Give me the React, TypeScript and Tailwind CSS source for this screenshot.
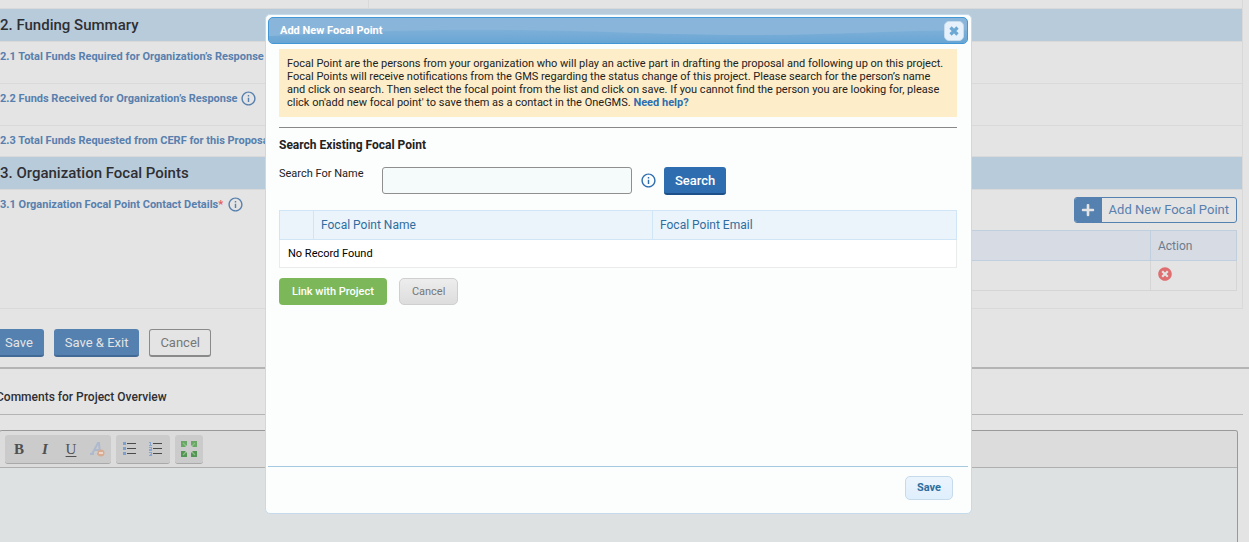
import type { ReactNode } from 'react'
import { FaPlus, FaTimesCircle } from 'react-icons/fa'
import { MdInfoOutline } from 'react-icons/md'

function InfoButton({ label, className = '' }: { label: string; className?: string }) {
  return (
    <button type="button" aria-label={label} className={`shrink-0 ${className}`}>
      <MdInfoOutline size={17} />
    </button>
  )
}

function SectionHeader({ children }: { children: ReactNode }) {
  return (
    <h2 className="h-[33px] border-b border-[#d9d9d9] bg-[#b8cbda] pl-2 text-[15px] leading-8 font-medium text-[#2f2f33]">
      {children}
    </h2>
  )
}

function FundRow({ label, info, className }: { label: string; info?: boolean; className: string }) {
  return (
    <div className={`flex items-start border-b border-[#d9d9d9] pt-[6px] pl-2 ${className}`}>
      <span className="text-[11px] leading-[18px] font-bold whitespace-nowrap text-[#5880ae]">{label}</span>
      {info && <InfoButton label="Info" className="ml-[2px] text-[#5880ae]" />}
    </div>
  )
}

function ToolGroup({ children }: { children: ReactNode }) {
  return <div className="flex h-[29px] rounded-[3px] border-b border-[#a9a9a9] bg-[#cbcbcb] px-px">{children}</div>
}

function ToolButton({ label, children }: { label: string; children: ReactNode }) {
  return (
    <button
      type="button"
      aria-label={label}
      className="flex w-[26px] items-center justify-center font-['Liberation_Serif',serif] text-[15px] leading-4 text-[#505050]"
    >
      {children}
    </button>
  )
}

function RemoveFormatIcon() {
  return (
    <svg width="16" height="16" viewBox="0 0 16 16">
      <path d="M1 13h4M8 13h3M3 13L9 2h1l1 11M5 9h5" fill="none" stroke="#adbace" strokeWidth="2" />
      <circle cx="12" cy="12" r="3.5" fill="#d9ab90" />
      <path d="M10 12h4" stroke="#f0e4dc" strokeWidth="1.4" />
    </svg>
  )
}

function BulletListIcon() {
  return (
    <svg width="16" height="16" viewBox="0 0 16 16" shapeRendering="crispEdges">
      {[1, 6, 11].map((y) => (
        <g key={y}>
          <rect x="1" y={y} width="3" height="3" fill="#7d9fce" />
          <rect x="5" y={y + 1} width="9" height="1" fill="#4a4a4a" />
        </g>
      ))}
    </svg>
  )
}

function NumberedListIcon() {
  return (
    <svg width="16" height="16" viewBox="0 0 16 16" shapeRendering="crispEdges">
      <path
        d="M1 1.500h1.500V4M1 4.500h3M1 6.500h2.500V8H1.500v1.500H4M1 11.500h2.500v3H1M1.500 13H4"
        fill="none"
        stroke="#86a5d0"
      />
      <path d="M5 2.500h9M5 7.500h9M5 12.500h9" stroke="#4a4a4a" />
    </svg>
  )
}

function MaximizeIcon() {
  return (
    <svg width="16" height="16" viewBox="0 0 16 16">
      <g fill="#68a864">
        <path d="M0 0h6v4L4 6H0z" />
        <path d="M10 0h6v6h-4l-2-2z" />
      </g>
      <g fill="#539653">
        <path d="M0 10h4l2 2v4H0z" />
        <path d="M12 10h4v6h-6v-4z" />
      </g>
      <path d="M2 2l3 3M14 2l-3 3M2 14l3-3M14 14l-3-3" stroke="#8fc089" strokeWidth="1.2" />
    </svg>
  )
}

function OverviewForm() {
  return (
    <form>
      <div className="mr-[6px] border-r border-[#d9d9d9]">
        <div className="h-[9px] border-b border-[#d9d9d9]">
          <div className="h-2 w-[334px] border-r border-[#d9d9d9] sm:w-[377px]" />
        </div>
        <SectionHeader>2. Funding Summary</SectionHeader>
        <FundRow label="2.1 Total Funds Required for Organization’s Response" className="h-[42px]" />
        <FundRow label="2.2 Funds Received for Organization’s Response" info className="h-[42px]" />
        <FundRow label="2.3 Total Funds Requested from CERF for this Proposal" className="h-[31px]" />
        <SectionHeader>3. Organization Focal Points</SectionHeader>
        <div className="flex border-b border-[#d9d9d9]">
          <div className="flex w-[377px] shrink-0 items-start pt-[6px] pl-2">
            <span className="text-[11px] leading-[18px] font-bold text-[#5880ae]">
              3.1 Organization Focal Point Contact Details<span className="text-[#e45a62]">*</span>
            </span>
            <InfoButton label="Info" className="ml-1 text-[#5880ae]" />
          </div>
          <div className="flex flex-1 flex-col items-end pt-[7px] pr-[5px] pb-[17px]">
            <button
              type="button"
              className="flex h-[26px] items-stretch overflow-hidden rounded-[3px] border border-[#5481b0] text-[13px] text-[#5880ae]"
            >
              <span className="flex w-[27px] items-center justify-center bg-[#5481b0] text-[#e4e4e4]">
                <FaPlus size={14} />
              </span>
              <span className="px-[7px] leading-6">Add New Focal Point</span>
            </button>
            <table className="mt-[7px] w-full border-collapse text-left text-[12px] text-[#6d7b8d]">
              <thead>
                <tr className="h-[30px] bg-[#d7dbe3]">
                  <th className="border border-[#c0cfde]" />
                  <th className="w-[86px] border border-[#c0cfde] px-[7px] font-normal">Action</th>
                </tr>
              </thead>
              <tbody>
                <tr className="h-[30px]">
                  <td className="border border-[#d5d5d5]" />
                  <td className="border border-[#d5d5d5] px-[7px] pb-[3px]">
                    <button type="button" aria-label="Remove" className="block text-[#df6e70]">
                      <FaTimesCircle size={14} />
                    </button>
                  </td>
                </tr>
              </tbody>
            </table>
          </div>
        </div>
      </div>
      <div className="mt-5 flex gap-[10px] pl-[2px] text-[13px]">
        <button type="button" className="h-7 rounded-[3px] border-b-2 border-[#426a96] bg-[#5481b0] px-[11px] pt-0.5 text-[#e4e4e4]">
          Save
        </button>
        <button type="button" className="h-7 rounded-[3px] border-b-2 border-[#426a96] bg-[#5481b0] px-[11px] pt-0.5 text-[#e4e4e4]">
          Save &amp; Exit
        </button>
        <button type="button" className="h-7 rounded-[3px] border border-b-2 border-[#8a8a8a] px-[10px] text-[#777777]">
          Cancel
        </button>
      </div>
    </form>
  )
}

function CommentsEditor() {
  return (
    <section className="mt-[10px] flex flex-1 flex-col border-t-2 border-[#b4b4b4]">
      <label
        htmlFor="comments"
        className="mr-[6px] block border-b border-[#b4b4b4] pt-5 pb-[9px] pl-1 text-[12px] leading-4 font-medium text-[#2f2f33]"
      >
        Comments for Project Overview
      </label>
      <div className="mt-[15px] mr-[11px] ml-[7px] flex flex-1 flex-col overflow-hidden rounded-t-[3px] border border-b-0 border-[#999999]">
        <div className="flex gap-[5px] border-b border-[#b0b0b0] bg-[#dcdcdc] px-[5px] pt-1 pb-[3px]">
          <ToolGroup>
            <ToolButton label="Bold">
              <b>B</b>
            </ToolButton>
            <ToolButton label="Italic">
              <b className="italic">I</b>
            </ToolButton>
            <ToolButton label="Underline">
              <span className="underline underline-offset-2">U</span>
            </ToolButton>
            <ToolButton label="Remove format">
              <RemoveFormatIcon />
            </ToolButton>
          </ToolGroup>
          <ToolGroup>
            <ToolButton label="Bulleted list">
              <BulletListIcon />
            </ToolButton>
            <ToolButton label="Numbered list">
              <NumberedListIcon />
            </ToolButton>
          </ToolGroup>
          <ToolGroup>
            <ToolButton label="Maximize">
              <MaximizeIcon />
            </ToolButton>
          </ToolGroup>
        </div>
        <textarea id="comments" className="flex-1 resize-none bg-[#dde1e2] p-2 outline-none" />
      </div>
    </section>
  )
}

function FocalPointDialog() {
  return (
    <div
      role="dialog"
      aria-labelledby="dialog-title"
      className="flex min-h-[500px] w-[707px] flex-col rounded-[5px] border border-[#c5dbec] bg-[#fcfdfd] p-[2px] pr-[3px] text-[11px] text-[#222222]"
    >
      <div className="relative flex h-[27px] items-center justify-between overflow-hidden rounded-[5px] border border-[#4297d7] bg-[#8ab5da] pr-[3px] pl-[11px]">
        <svg className="absolute inset-0 h-full w-full" viewBox="0 0 700 25" preserveAspectRatio="none">
          <defs>
            <linearGradient id="bar" x1="0" y1="0" x2="0" y2="1">
              <stop offset="0" stopColor="#7db0d9" />
              <stop offset="1" stopColor="#69a5d3" />
            </linearGradient>
          </defs>
          <path d="M0 18C80 14 160 11 250 12S400 17 480 17S620 13 700 12V25H0Z" fill="url(#bar)" />
        </svg>
        <h1 id="dialog-title" className="relative pt-0.5 font-bold text-white">
          Add New Focal Point
        </h1>
        <button
          type="button"
          aria-label="Close"
          className="relative flex size-5 items-center justify-center rounded-[5px] border border-[#c5dbec] bg-[#e6f1fb]"
        >
          <svg width="10" height="10" viewBox="0 0 10 10">
            <path d="M1.500 1.500l7 7M8.500 1.500l-7 7" stroke="#6da8d5" strokeWidth="3.200" />
          </svg>
        </button>
      </div>

      <div className="flex flex-1 flex-col items-start px-[11px] pt-[5px]">
        <p className="w-full bg-[#fdedc9] p-2 leading-[13px]">
          Focal Point are the persons from your organization who will play an active part in drafting the proposal and
          following up on this project. Focal Points will receive notifications from the GMS regarding the status change
          of this project. Please search for the person’s name and click on search. Then select the focal point from the
          list and click on save. If you cannot find the person you are looking for, please click on'add new focal point'
          to save them as a contact in the OneGMS.{' '}
          <a href="#" className="font-bold text-[#2e6eb0]">
            Need help?
          </a>
        </p>
        <hr className="mt-[10px] w-full border-[#888888]" />
        <h2 className="mt-[9px] text-[12px] leading-4 font-bold">Search Existing Focal Point</h2>
        <div className="mt-[14px] flex">
          <label htmlFor="search-name" className="w-[103px] leading-[13px]">
            Search For Name
          </label>
          <input
            id="search-name"
            type="text"
            className="h-[27px] w-[250px] rounded-[3px] border border-[#8f8f8f] bg-[#f5fafb] px-2 outline-none"
          />
          <InfoButton label="Info" className="mr-[7px] ml-2 self-start pt-[5px] text-[#2e6eb0]" />
          <button
            type="button"
            className="h-7 rounded-[3px] border-b-2 border-[#1d5088] bg-[#2e6eb0] px-[11px] pt-0.5 text-[13px] font-medium text-white"
          >
            Search
          </button>
        </div>
        <table className="mt-[15px] w-full table-fixed border-collapse text-left">
          <thead>
            <tr className="h-[29px] bg-[#ebf3fb] text-[12px] text-[#2e6e9e]">
              <th className="w-[34px] border border-[#d0e5f5]" />
              <th className="border border-[#d0e5f5] px-[7px] font-normal">Focal Point Name</th>
              <th className="w-[304px] border border-[#d0e5f5] px-[7px] font-normal">Focal Point Email</th>
            </tr>
          </thead>
          <tbody>
            <tr className="h-7 bg-white text-black">
              <td colSpan={3} className="border border-[#ebebeb] px-2 pt-0.5">
                No Record Found
              </td>
            </tr>
          </tbody>
        </table>
        <div className="mt-[10px] flex gap-3">
          <button type="button" className="h-[27px] rounded-[4px] bg-[#7cb85a] px-[13px] pt-0.5 font-medium text-white">
            Link with Project
          </button>
          <button
            type="button"
            className="h-[27px] rounded-[5px] border border-[#cfcfcf] bg-linear-to-b from-[#ededed] to-[#dddddd] px-3 pt-0.5 text-[#777777]"
          >
            Cancel
          </button>
        </div>
      </div>

      <div className="flex justify-end border-t border-[#a6c9e2] pt-[9px] pr-[15px] pb-[11px]">
        <button
          type="button"
          className="h-6 rounded-[5px] border border-[#c5dbec] bg-linear-to-b from-[#ebf4fd] to-[#dfeffc] px-[11px] font-bold text-[#2e6e9e]"
        >
          Save
        </button>
      </div>
    </div>
  )
}

export default function App() {
  return (
    <div className="relative h-screen overflow-hidden bg-[#e4e4e4] font-[Roboto,sans-serif]">
      <main className="-ml-2 flex h-full flex-col">
        <OverviewForm />
        <CommentsEditor />
      </main>
      <div className="absolute inset-0 flex items-start justify-center pt-[14px] pr-3">
        <FocalPointDialog />
      </div>
    </div>
  )
}
